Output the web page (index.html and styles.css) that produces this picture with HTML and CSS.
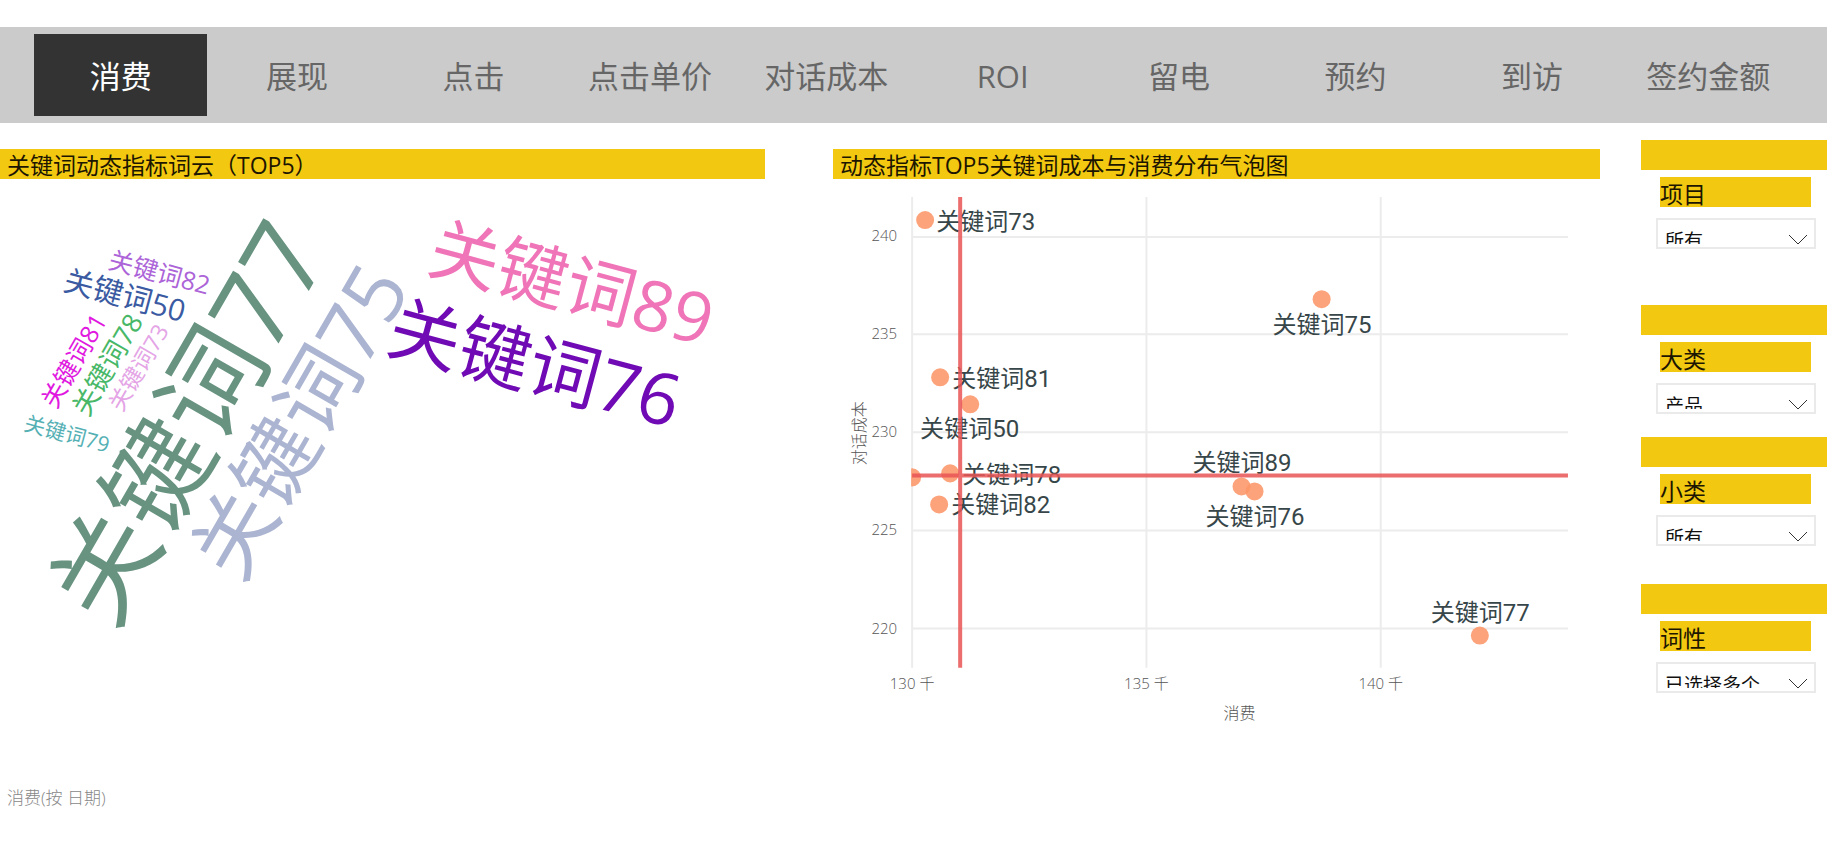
FILE: index.html
```html
<!DOCTYPE html>
<html lang="zh-CN">
<head>
<meta charset="utf-8">
<meta name="viewport" content="width=device-width, initial-scale=1">
<title>关键词动态指标</title>
<link rel="stylesheet" href="styles.css">
</head>
<body>
<nav class="tabs" aria-label="指标">
  <button class="tab tab-active" type="button" aria-pressed="true">消费</button>
  <button class="tab" type="button">展现</button>
  <button class="tab" type="button">点击</button>
  <button class="tab" type="button">点击单价</button>
  <button class="tab" type="button">对话成本</button>
  <button class="tab" type="button">ROI</button>
  <button class="tab" type="button">留电</button>
  <button class="tab" type="button">预约</button>
  <button class="tab" type="button">到访</button>
  <button class="tab" type="button">签约金额</button>
</nav>

<main class="board">
  <section class="panel">
    <h2 class="panel-title">关键词动态指标词云（TOP5）</h2>
    <svg class="cloud" viewBox="0 179 765 580" role="img" aria-label="关键词词云">
      <text class="w77" transform="translate(112 632) rotate(-60)">关键词77</text>
      <text class="w75" transform="translate(240 585) rotate(-60)">关键词75</text>
      <text class="w89" transform="translate(425 271) rotate(15)">关键词89</text>
      <text class="w76" transform="translate(384 351) rotate(15)">关键词76</text>
      <text class="w50" transform="translate(62 290) rotate(15)">关键词50</text>
      <text class="w82" transform="translate(107 268) rotate(15)">关键词82</text>
      <text class="w79" transform="translate(23 430) rotate(15)">关键词79</text>
      <text class="w81" transform="translate(56 410) rotate(-60)">关键词81</text>
      <text class="w78" transform="translate(88 418) rotate(-60)">关键词78</text>
      <text class="w73" transform="translate(122 413) rotate(-60)">关键词73</text>
    </svg>
  </section>

  <section class="panel">
    <h2 class="panel-title">动态指标TOP5关键词成本与消费分布气泡图</h2>
    <svg class="bubbles" viewBox="834 179 766 580" role="img" aria-label="成本与消费分布气泡图">
      <clipPath id="plot"><rect x="912" y="197" width="656" height="471"/></clipPath>
      <g class="grid">
        <path d="M913 197V667M1147 197V667M1381 197V667"/>
        <path d="M913 237H1568M913 334H1568M913 432H1568M913 530H1568M913 628H1568"/>
      </g>
      <g class="axis axis-y">
        <text x="898" y="241">240</text>
        <text x="898" y="339">235</text>
        <text x="898" y="437">230</text>
        <text x="898" y="535">225</text>
        <text x="898" y="633">220</text>
      </g>
      <g class="axis axis-x">
        <text x="913" y="688">130 千</text>
        <text x="1147" y="688">135 千</text>
        <text x="1381" y="688">140 千</text>
      </g>
      <text class="axis-name" x="1240" y="718">消费</text>
      <text class="axis-name" transform="translate(866 433) rotate(-90)">对话成本</text>
      <g class="dots" clip-path="url(#plot)">
        <circle cx="926" cy="220" r="9"/>
        <circle cx="941" cy="377" r="9"/>
        <circle cx="971" cy="404" r="9"/>
        <circle cx="913" cy="477" r="9"/>
        <circle cx="951" cy="473" r="9"/>
        <circle cx="940" cy="504" r="9"/>
        <circle cx="1322" cy="299" r="9"/>
        <circle cx="1242" cy="486" r="9"/>
        <circle cx="1255" cy="491" r="9"/>
        <circle cx="1480" cy="635" r="9"/>
      </g>
      <g class="labels">
        <text x="937" y="230">关键词73</text>
        <text x="953" y="387">关键词81</text>
        <text x="921" y="437">关键词50</text>
        <text x="963" y="483">关键词78</text>
        <text x="952" y="513">关键词82</text>
        <text x="1273" y="333">关键词75</text>
        <text x="1193" y="471">关键词89</text>
        <text x="1206" y="525">关键词76</text>
        <text x="1431" y="620">关键词77</text>
      </g>
      <path class="average" d="M961 197V667M913 475H1568"/>
    </svg>
  </section>

  <aside class="filters">
    <div class="filter">
      <div class="filter-bar"></div>
      <label class="filter-name" for="project">项目</label>
      <div class="picker">
        <div class="picker-clip"><select id="project"><option>所有</option></select></div>
        <svg class="chevron" viewBox="0 0 18 10" aria-hidden="true"><path d="M0 0L9 9L18 0"/></svg>
      </div>
    </div>
    <div class="filter filter-far">
      <div class="filter-bar"></div>
      <label class="filter-name" for="major">大类</label>
      <div class="picker">
        <div class="picker-clip"><select id="major"><option>产品</option></select></div>
        <svg class="chevron" viewBox="0 0 18 10" aria-hidden="true"><path d="M0 0L9 9L18 0"/></svg>
      </div>
    </div>
    <div class="filter filter-near">
      <div class="filter-bar"></div>
      <label class="filter-name" for="minor">小类</label>
      <div class="picker">
        <div class="picker-clip"><select id="minor"><option>所有</option></select></div>
        <svg class="chevron" viewBox="0 0 18 10" aria-hidden="true"><path d="M0 0L9 9L18 0"/></svg>
      </div>
    </div>
    <div class="filter filter-mid">
      <div class="filter-bar"></div>
      <label class="filter-name" for="nature">词性</label>
      <div class="picker">
        <div class="picker-clip"><select id="nature"><option>已选择多个</option></select></div>
        <svg class="chevron" viewBox="0 0 18 10" aria-hidden="true"><path d="M0 0L9 9L18 0"/></svg>
      </div>
    </div>
  </aside>
</main>

<p class="trend-title">消费(按 日期)</p>
</body>
</html>
```

FILE: styles.css
```css
* {
  box-sizing: border-box;
}

body {
  margin: 0;
  padding-top: 27px;
  background: #fff;
  color: #1c1500;
  font-family: "Open Sans", "Noto Sans CJK SC", sans-serif;
  font-size: 16px;
  font-weight: 300;
}

.tabs {
  display: grid;
  grid-template-columns: repeat(10, minmax(0, 1fr));
  gap: 3px;
  padding: 7px 32px 7px 34px;
  background: #cbcbcb;
}

.tab {
  height: 82px;
  padding: 2px 0 0;
  border: 0;
  background: transparent;
  color: #666;
  font-family: inherit;
  font-size: 31px;
  font-weight: 400;
  line-height: 40px;
  white-space: nowrap;
}

.tab-active {
  background: #333;
  color: #fff;
}

.board {
  display: grid;
  grid-template-columns: minmax(0, 792fr) minmax(0, 767fr) 186px;
  column-gap: 41px;
  padding-top: 17px;
}

.board > .panel:first-child {
  margin-right: 27px;
}

.panel {
  padding-top: 9px;
}

.panel-title {
  height: 30px;
  margin: 0;
  padding-left: 7px;
  background: #f2c811;
  font-size: 23px;
  font-weight: 400;
  line-height: 32px;
  white-space: nowrap;
}

/* Both drawings start level with the top of the title bar's lower edge. */
.cloud,
.bubbles {
  display: block;
  width: 100%;
}

.cloud {
  font-weight: 400;
}

.w77 { fill: #679380; font-size: 106px; }
.w75 { fill: #abb4d1; font-size: 83px; }
.w89 { fill: #f074b8; font-size: 70px; }
.w76 { fill: #6f0ab4; font-size: 72px; }
.w50 { fill: #3a5aa2; font-size: 30px; }
.w82 { fill: #ac64d8; font-size: 25px; }
.w79 { fill: #55b0b4; font-size: 21px; }
.w81 { fill: #e018e0; font-size: 25px; }
.w78 { fill: #48b868; font-size: 27px; }
.w73 { fill: #e4a4e6; font-size: 23px; }

.grid {
  fill: none;
  stroke: #ececec;
  stroke-width: 2;
}

.axis {
  fill: #555;
  font-size: 15px;
}

.axis-y {
  text-anchor: end;
}

.axis-x {
  text-anchor: middle;
}

.axis-name {
  fill: #555;
  font-size: 16px;
  text-anchor: middle;
}

.dots {
  fill: #fd9669;
  fill-opacity: 0.88;
}

.labels {
  fill: #374649;
  font-family: Roboto, "Noto Sans CJK SC", sans-serif;
  font-size: 24px;
  font-weight: 400;
}

.average {
  fill: none;
  stroke: #e85555;
  stroke-opacity: 0.86;
  stroke-width: 4;
}

.filter-far { margin-top: 56px; }
.filter-near { margin-top: 23px; }
.filter-mid { margin-top: 38px; }

.filter-bar {
  height: 30px;
  background: #f2c811;
}

.filter-name {
  display: block;
  height: 30px;
  margin: 7px 16px 11px 19px;
  padding-top: 2px;
  background: #f2c811;
  font-size: 23px;
  font-weight: 400;
  line-height: 30px;
}

.picker {
  position: relative;
  height: 31px;
  margin: 0 11px 0 15px;
  border: 2px solid #eaeaea;
}

.picker-clip {
  height: 24px;
  overflow: hidden;
}

.picker select {
  width: 100%;
  height: 41px;
  padding: 0 30px 0 7px;
  border: 0;
  appearance: none;
  background: transparent;
  color: #111;
  font-family: inherit;
  font-size: 19px;
}

.chevron {
  position: absolute;
  right: 7px;
  bottom: 2px;
  width: 18px;
  height: 10px;
  fill: none;
  stroke: #333;
  pointer-events: none;
}

.trend-title {
  margin: 26px 0 0;
  padding-left: 7px;
  color: #888;
  font-size: 17px;
  line-height: 24px;
}
```
